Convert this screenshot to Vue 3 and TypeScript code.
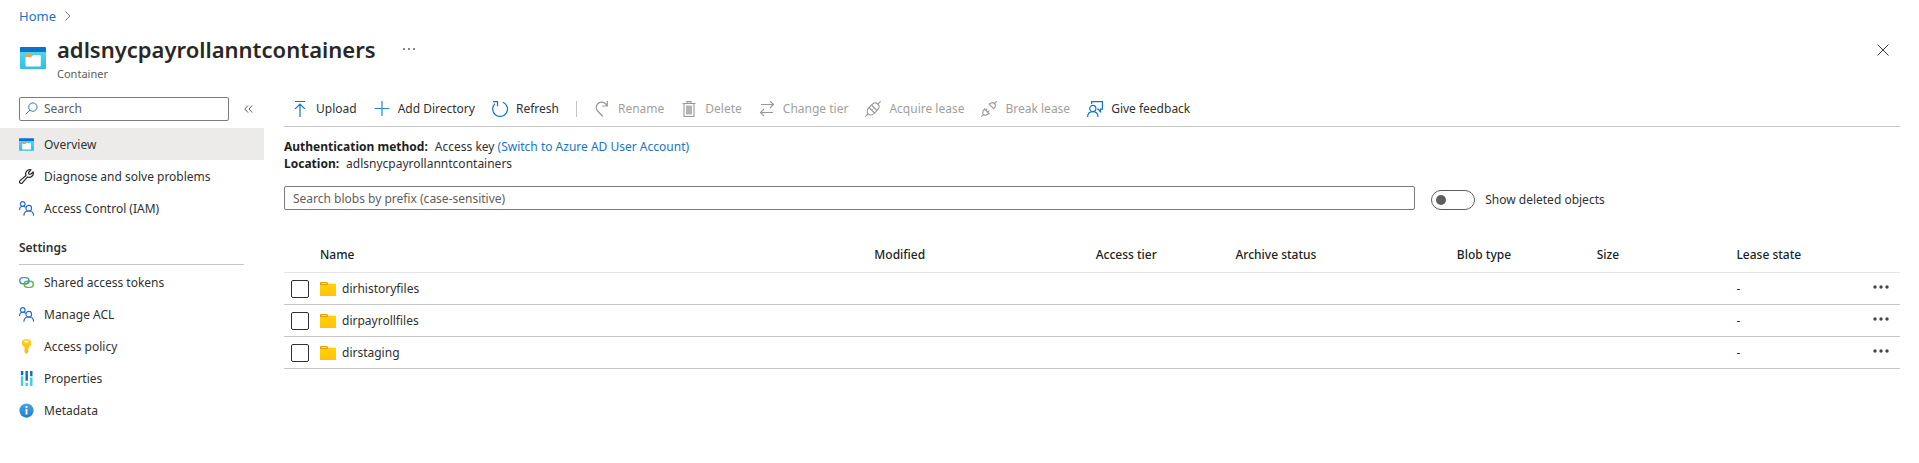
<script setup lang="ts">
import { ref } from 'vue'

interface NavItem { label: string; icon: string }
interface Command { label: string; icon: string; disabled?: boolean; divider?: boolean }
interface Blob { name: string; lease: string; checked: boolean }

const mainItems: NavItem[] = [
  { label: 'Overview', icon: 'container' },
  { label: 'Diagnose and solve problems', icon: 'wrench' },
  { label: 'Access Control (IAM)', icon: 'people' },
]
const settingsItems: NavItem[] = [
  { label: 'Shared access tokens', icon: 'link' },
  { label: 'Manage ACL', icon: 'people' },
  { label: 'Access policy', icon: 'key' },
  { label: 'Properties', icon: 'bars' },
  { label: 'Metadata', icon: 'info' },
]
const groups = [
  { title: '', items: mainItems },
  { title: 'Settings', items: settingsItems },
]
const commands: Command[] = [
  { label: 'Upload', icon: 'upload' },
  { label: 'Add Directory', icon: 'plus' },
  { label: 'Refresh', icon: 'refresh' },
  { label: 'Rename', icon: 'rename', disabled: true, divider: true },
  { label: 'Delete', icon: 'delete', disabled: true },
  { label: 'Change tier', icon: 'swap', disabled: true },
  { label: 'Acquire lease', icon: 'plug', disabled: true },
  { label: 'Break lease', icon: 'unplug', disabled: true },
  { label: 'Give feedback', icon: 'feedback' },
]
const columns = ['Name', 'Modified', 'Access tier', 'Archive status', 'Blob type', 'Size', 'Lease state']

const active = ref('Overview')
const menuFilter = ref('')
const prefix = ref('')
const showDeleted = ref(false)
const blobs = ref<Blob[]>([
  { name: 'dirhistoryfiles', lease: '-', checked: false },
  { name: 'dirpayrollfiles', lease: '-', checked: false },
  { name: 'dirstaging', lease: '-', checked: false },
])
</script>

<template>
  <svg class="sprite" aria-hidden="true">
    <defs>
      <linearGradient id="g-teal" x1="0" y1="0" x2="0" y2="1">
        <stop offset="0" stop-color="#50d5ee" /><stop offset="1" stop-color="#2fbfde" />
      </linearGradient>
      <linearGradient id="g-folder" x1="0" y1="0" x2="0" y2="1">
        <stop offset="0" stop-color="#ffd400" /><stop offset="1" stop-color="#ffc20e" />
      </linearGradient>
      <linearGradient id="g-info" x1="0" y1="0" x2="0" y2="1">
        <stop offset="0" stop-color="#4ba3e6" /><stop offset="1" stop-color="#1b7fd0" />
      </linearGradient>
      <linearGradient id="g-key" x1="0" y1="0" x2="0" y2="1">
        <stop offset="0" stop-color="#ffd21a" /><stop offset="1" stop-color="#fbb615" />
      </linearGradient>
    </defs>
    <symbol id="i-container" viewBox="0 0 26 22">
      <path d="M0 4h26v17a1 1 0 0 1-1 1H1a1 1 0 0 1-1-1z" fill="url(#g-teal)" />
      <path d="M1 0h24a1 1 0 0 1 1 1v4H0V1a1 1 0 0 1 1-1z" fill="#0a73cc" />
      <path d="M6 7h5.500l1.200 1.500V11H6z" fill="#f3a04a" />
      <path d="M6.500 10h4.700l1.800-1.700h7a.8.8 0 0 1 .8.8v9.600a.8.8 0 0 1-.8.8H6.300a.8.8 0 0 1-.8-.8v-7.900a.8.8 0 0 1 1-.8z" fill="#fff" />
    </symbol>
    <symbol id="i-wrench" viewBox="0 0 16 16">
      <path d="M15.100 3.200a4.400 4.400 0 0 1-6 5.300L3.600 14.900a1.700 1.700 0 0 1-2.400 0l-.1-.1a1.700 1.700 0 0 1 .1-2.400l6.300-5.500A4.400 4.400 0 0 1 12.800.9L10.300 3.500l.3 1.900 1.900.2z" fill="none" stroke="#292827" stroke-width="1.300" stroke-linejoin="round" />
    </symbol>
    <symbol id="i-people" viewBox="0 0 16 16">
      <g fill="none" stroke="#2467cf" stroke-width="1.200">
        <circle cx="4" cy="3.100" r="2.500" /><path d="M.6 9.500C.6 7 2 5.600 4 5.600c1.200 0 2.200.4 2.900 1.100" />
        <circle cx="10.400" cy="7.600" r="3" /><path d="M5.200 15.800c0-3.200 2.200-5.200 5.200-5.200s5.200 2 5.200 5.200" />
      </g>
    </symbol>
    <symbol id="i-link" viewBox="0 0 16 16">
      <rect x=".8" y="2.800" width="9.800" height="6.600" rx="3.300" fill="none" stroke="#3b96d9" stroke-width="1.500" />
      <rect x="5.500" y="6.600" width="9.800" height="6.600" rx="3.300" fill="none" stroke="#6bb344" stroke-width="1.500" />
      <path d="M6.500 9.400h.8a3.300 3.300 0 0 0 3.300-3.300" fill="none" stroke="#3b96d9" stroke-width="1.500" />
    </symbol>
    <symbol id="i-key" viewBox="0 0 16 16">
      <path fill-rule="evenodd" d="M6 .3h4A3.900 3.900 0 0 1 13 4.600c0 1.800-1 3.200-2.600 4v1.200l-.8.900.8.900-.8.9.7.9L8 16l-2.100-1.800V8.600C4.300 7.800 3 6.400 3 4.600A3.900 3.900 0 0 1 6 .3zM6.500 1.800a1.200 1.200 0 0 0 0 2h3a1.200 1.200 0 0 0 0-2z" fill="url(#g-key)" />
    </symbol>
    <symbol id="i-bars" viewBox="0 0 16 16">
      <path d="M2 0h2.600v4.500H2zM6.900 0h2.600v10.500H6.900zM11.800 0h2.600v5.500h-2.600z" fill="#1170b8" />
      <path d="M2 5.500h2.600V16H2zM6.900 12.500h2.600V16H6.900zM11.800 7h2.600v9h-2.600z" fill="#43cdec" />
    </symbol>
    <symbol id="i-info" viewBox="0 0 16 16">
      <circle cx="8" cy="8" r="7.600" fill="url(#g-info)" />
      <circle cx="8" cy="4.300" r="1.200" fill="#fff" /><path d="M7 6.500h2v5.800H7z" fill="#fff" />
    </symbol>
    <symbol id="i-upload" viewBox="0 0 16 16">
      <path d="M3 .5h10M8 16V3M3.200 7.800 8 3l4.800 4.800" fill="none" stroke="#0f74cb" stroke-width="1.200" />
    </symbol>
    <symbol id="i-plus" viewBox="0 0 16 16">
      <path d="M8 0v15M.5 7.500h15" fill="none" stroke="#2b86cf" stroke-width="1.200" />
    </symbol>
    <symbol id="i-refresh" viewBox="0 0 16 16">
      <path d="M11 1.200A7.400 7.400 0 1 1 3 2.600M1 .7h4.500v4.500" fill="none" stroke="#0f74cb" stroke-width="1.200" />
    </symbol>
    <symbol id="i-rename" viewBox="0 0 16 16">
      <path d="M13.300 0v5H8.200M13.300 5C11.600 2.300 9.800 1.200 7.600 1.200A5.300 5.300 0 0 0 3.200 9.500L8.800 15.500" fill="none" stroke="#9a9896" stroke-width="1.200" />
    </symbol>
    <symbol id="i-delete" viewBox="0 0 16 16">
      <path d="M1.500 2.500h13M6 2.500V.6h4v1.900M3 2.500v13h10v-13" fill="none" stroke="#9a9896" stroke-width="1.100" />
      <path d="M5 4.500h6V13.500H5z" fill="#b5b3b1" />
    </symbol>
    <symbol id="i-swap" viewBox="0 0 16 16">
      <path d="M2 3.500h12.500M11 0l3.500 3.500L11 7M14 11.500H1.500M5 8l-3.500 3.500L5 15" fill="none" stroke="#9a9896" stroke-width="1.100" />
    </symbol>
    <symbol id="i-plug" viewBox="0 0 16 16">
      <g fill="none" stroke="#9a9896" stroke-width="1.100">
        <path d="M.3 15.700 3 13M12.700 3.300 15.700.3M4 6.500l5.500 5.500M6.500 4l5.500 5.500M6.300 9.700l1.300-1.300M8.400 7.600l1.300-1.300" />
        <path d="M4 6.500 8 2.700c2-1.600 3.800-.9 4.700.6 1.500.9 2.200 2.700.6 4.700L9.500 12c-2 2.400-5 2.500-6.200 1-1.600-1.500-1.500-4.300.7-6.500z" />
      </g>
    </symbol>
    <symbol id="i-unplug" viewBox="0 0 16 16">
      <g fill="none" stroke="#9a9896" stroke-width="1.100">
        <path d="M.3 15.700l2.200-2.200M13.500 2.500 15.700.3M3 7.500l5.500 5.500M7.700 2.700l5.500 5.500M4.800 9.300l1.600-1.600M6.700 11.200l1.600-1.600" />
        <path d="M3.700 8.200c-2 1.500-2.500 3.700-1.200 5.300 1.600 1.300 3.800.8 5.300-1.200M8.400 3.400c1.500-2 3.600-2.300 5.100-.9 1.400 1.500 1.100 3.600-.9 5.100" />
      </g>
    </symbol>
    <symbol id="i-feedback" viewBox="0 0 16 16">
      <g fill="none" stroke="#0f74cb" stroke-width="1.200">
        <path d="M4.600 3V.6h10.800v7.600h-1.900v2.500l-2.500-2.500h-.9" />
        <circle cx="5.800" cy="7.500" r="3.100" /><path d="M.6 16c0-3.300 2.100-5.400 5.200-5.400s5.200 2.100 5.200 5.400" />
      </g>
    </symbol>
    <symbol id="i-folder" viewBox="0 0 16 14">
      <path d="M0 .8A.8.8 0 0 1 .8 0h6.400l1.300 2H16v11a.7.7 0 0 1-.7.700H.7A.7.7 0 0 1 0 13z" fill="#e5a00d" />
      <path d="M1.500.9h5l.6 1H1.500z" fill="#f7dfa4" />
      <path d="M0 3h7.500l1.200-1.200H16V13a.7.7 0 0 1-.7.700H.7A.7.7 0 0 1 0 13z" fill="url(#g-folder)" />
    </symbol>
    <symbol id="i-dots" viewBox="0 0 18 4">
      <circle cx="3" cy="2" r="1.700" /><circle cx="9" cy="2" r="1.700" /><circle cx="15" cy="2" r="1.700" />
    </symbol>
    <symbol id="i-ellipsis" viewBox="0 0 14 4">
      <path d="M1 1h2v2H1zM6 1h2v2H6zM11 1h2v2h-2z" />
    </symbol>
  </svg>

  <div class="page">
    <nav class="breadcrumb" aria-label="Breadcrumb">
      <a href="#">Home</a>
      <svg class="chevron" viewBox="0 0 6 10"><path d="M.5.500 5 5 .5 9.500" /></svg>
    </nav>

    <header class="header">
      <svg class="header-icon"><use href="#i-container" /></svg>
      <div class="titles">
        <div class="title-row">
          <h1>adlsnycpayrollanntcontainers</h1>
          <button class="bare more" aria-label="More actions"><svg><use href="#i-ellipsis" /></svg></button>
        </div>
        <p class="subtitle">Container</p>
      </div>
      <button class="bare close" aria-label="Close">
        <svg viewBox="0 0 12 12"><path d="M.5.500l11 11M11.500.500l-11 11" /></svg>
      </button>
    </header>

    <div class="body">
      <aside class="sidebar">
        <div class="search-row">
          <label class="menu-search">
            <svg viewBox="0 0 14 14"><circle cx="8.500" cy="5.500" r="4.500" /><path d="M5.300 8.700.8 13.200" /></svg>
            <input v-model="menuFilter" type="text" placeholder="Search" aria-label="Search menu" />
          </label>
          <button class="bare collapse" aria-label="Collapse menu">
            <svg viewBox="0 0 9 8"><path d="M4 .5.800 4 4 7.500M8.200.500 5 4l3.200 3.500" /></svg>
          </button>
        </div>
        <section v-for="group in groups" :key="group.title">
          <h2 v-if="group.title">{{ group.title }}</h2>
          <a
            v-for="item in group.items"
            :key="item.label"
            href="#"
            class="nav-item"
            :class="{ active: item.label === active }"
            @click.prevent="active = item.label"
          >
            <svg><use :href="'#i-' + item.icon" /></svg>
            <span>{{ item.label }}</span>
          </a>
        </section>
      </aside>

      <main class="content">
        <div class="toolbar" role="toolbar">
          <template v-for="cmd in commands" :key="cmd.label">
            <span v-if="cmd.divider" class="divider"></span>
            <button class="bare command" :disabled="cmd.disabled">
              <svg><use :href="'#i-' + cmd.icon" /></svg>
              <span>{{ cmd.label }}</span>
            </button>
          </template>
        </div>

        <dl class="facts">
          <div><dt>Authentication method:</dt><dd>Access key <a href="#">(Switch to Azure AD User Account)</a></dd></div>
          <div><dt>Location:</dt><dd>adlsnycpayrollanntcontainers</dd></div>
        </dl>

        <div class="filters">
          <input v-model="prefix" class="prefix" type="text" placeholder="Search blobs by prefix (case-sensitive)" aria-label="Search blobs by prefix" />
          <label class="toggle">
            <input v-model="showDeleted" type="checkbox" role="switch" />
            <span>Show deleted objects</span>
          </label>
        </div>

        <table class="blobs">
          <colgroup>
            <col class="c-check" /><col class="c-name" /><col class="c-wide" /><col class="c-mid" />
            <col class="c-wide" /><col class="c-mid" /><col class="c-mid" /><col /><col class="c-more" />
          </colgroup>
          <thead>
            <tr>
              <td></td>
              <th v-for="column in columns" :key="column" scope="col">{{ column }}</th>
              <td></td>
            </tr>
          </thead>
          <tbody>
            <tr v-for="blob in blobs" :key="blob.name">
              <td><input v-model="blob.checked" class="check" type="checkbox" :aria-label="'Select ' + blob.name" /></td>
              <td><a href="#" class="blob-name"><svg><use href="#i-folder" /></svg><span>{{ blob.name }}</span></a></td>
              <td></td><td></td><td></td><td></td><td></td>
              <td>{{ blob.lease }}</td>
              <td><button class="bare row-more" :aria-label="'Actions for ' + blob.name"><svg><use href="#i-dots" /></svg></button></td>
            </tr>
          </tbody>
        </table>
      </main>
    </div>
  </div>
</template>

<style>
body { background: #fff; }
</style>

<style scoped>
.sprite { position: absolute; width: 0; height: 0; }
.page {
  font-family: "Noto Sans", sans-serif;
  font-size: 12px;
  line-height: 18px;
  color: #323130;
}
.page *, .page { box-sizing: border-box; }
svg { display: block; flex: none; }
a { color: #1b74c5; text-decoration: none; }
input { font: inherit; color: inherit; margin: 0; }
.bare { display: flex; align-items: center; padding: 0; border: 0; background: none; font: inherit; color: inherit; }

.breadcrumb { display: flex; align-items: center; gap: 9px; height: 32px; padding: 0 19px; font-size: 13px; }
.chevron { width: 6px; height: 10px; fill: none; stroke: #7a7876; }

.header { display: flex; align-items: flex-start; padding: 1px 30px 0 20px; height: 57px; }
.header-icon { width: 26px; height: 22px; margin-top: 14px; }
.titles { flex: 1; margin-left: 11px; }
.title-row { display: flex; align-items: center; gap: 26px; height: 32px; }
h1 { margin: 0; font-size: 22px; line-height: 32px; font-weight: 600; color: #292827; }
.more svg { width: 14px; height: 4px; fill: #8a8886; }
.subtitle { margin: 0; font-size: 11px; line-height: 18px; color: #605e5c; }
.close { margin-top: 11px; }
.close svg { width: 12px; height: 12px; fill: none; stroke: #3b3a39; }

.body { display: flex; align-items: flex-start; }
.sidebar { flex: none; width: 264px; }
.search-row { display: flex; align-items: center; gap: 15px; height: 39px; padding: 0 0 0 19px; }
.menu-search { display: flex; flex: none; align-items: center; gap: 6px; width: 210px; height: 24px; padding: 0 5px; border: 1px solid #7d7b79; border-radius: 2px; }
.menu-search svg { width: 13px; height: 13px; fill: none; stroke: #1b74c5; }
.menu-search input { flex: 1; min-width: 0; padding: 0; border: 0; outline: 0; background: none; }
input::placeholder { color: #605e5c; opacity: 1; }
.collapse svg { width: 9px; height: 8px; fill: none; stroke: #605e5c; }
h2 { margin: 16px 20px 1px 19px; font-size: 12px; line-height: 16px; padding-bottom: 8px; font-weight: 600; border-bottom: 1px solid #c8c6c4; }
.nav-item { display: flex; align-items: center; gap: 10px; height: 32px; padding: 1px 19px 0; color: inherit; }
.nav-item svg { width: 15px; height: 15px; }
.nav-item.active { background: #edebe9; }

.content { flex: 1; min-width: 0; padding: 0 19px 0 20px; }
.toolbar { display: flex; align-items: center; gap: 17px; height: 38px; padding: 2px 8px 0; border-bottom: 1px solid #c8c6c4; }
.command { gap: 8px; white-space: nowrap; }
.command svg { width: 16px; height: 16px; }
.command:disabled { color: #a19f9d; }
.divider { width: 1px; height: 16px; background: #c8c6c4; }

.facts { margin: 11px 0 14px; line-height: 17px; }
.facts div { display: flex; gap: 7px; }
dt { font-weight: 700; color: #201f1e; }
dd { margin: 0; }

.filters { display: flex; align-items: center; gap: 16px; }
.prefix { flex: 0 1 70%; height: 24px; padding: 0 8px; border: 1px solid #7d7b79; border-radius: 2px; background: none; }
.toggle { display: flex; align-items: center; gap: 10px; padding-top: 4px; }
.toggle input { appearance: none; display: flex; align-items: center; width: 44px; height: 20px; padding: 0 4px; border: 1px solid #605e5c; border-radius: 10px; }
.toggle input::before { content: ""; width: 10px; height: 10px; border-radius: 50%; background: #605e5c; }
.toggle input:checked { justify-content: flex-end; }

.blobs { width: 100%; margin-top: 27px; border-collapse: separate; border-spacing: 0; table-layout: fixed; }
.blobs th, .blobs td { height: 32px; padding: 1px 0 0; text-align: left; border-bottom: 1px solid #c8c6c4; }
.blobs thead th, .blobs thead td { height: 36px; border-color: #e6e4e2; }
.blobs th { font-weight: 500; color: #201f1e; }
.c-check { width: 36px; }
.c-name { width: 34.3%; }
.c-wide { width: 13.7%; }
.c-mid { width: 8.65%; }
.c-more { width: 45px; }
.check { appearance: none; display: block; width: 18px; height: 18px; margin-left: 7px; border: 1px solid #323130; border-radius: 2px; }
.check:checked { background: #1b74c5; }
.blob-name { display: flex; align-items: center; gap: 6px; color: inherit; }
.blob-name svg { width: 16px; height: 14px; }
.row-more { margin-left: auto; padding: 0 10px 4px 0; }
.row-more svg { width: 18px; height: 4px; fill: #494745; }
</style>
